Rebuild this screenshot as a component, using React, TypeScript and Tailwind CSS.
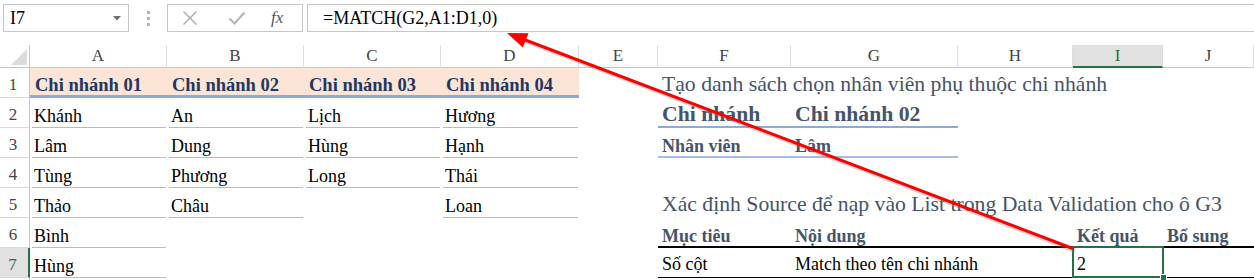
import type { ReactNode } from 'react';

const COLS = ['A', 'B', 'C', 'D', 'E', 'F', 'G', 'H', 'I', 'J'];

function RowHead({ n, active = false }: { n?: number; active?: boolean }) {
  return (
    <div
      className={`h-[30px] flex items-end justify-center pr-[3px] pb-[2px] border-b border-[#dadada] ${
        active ? 'bg-[#e1e1e1] text-[#217346] border-r-2 border-r-[#217346]' : 'text-[#444] border-r border-r-[#c6c6c6]'
      }`}
    >
      {n !== undefined && <span className="text-[17px] leading-[20px]">{n}</span>}
    </div>
  );
}

function ListHead({ text }: { text: string }) {
  return (
    <div className="h-[30px] flex items-end bg-[#fce4d6] border-b-[3px] border-[#8ea9db] pl-[5px]">
      <span className="text-[18.5px] leading-[20px] font-bold text-[#203764] whitespace-nowrap">{text}</span>
    </div>
  );
}

function ListCell({ text }: { text?: string }) {
  if (!text) return <div className="h-[30px]" />;
  return (
    <div className="h-[30px] flex">
      <div className="flex-1 ml-[2px] mr-[1px] flex items-end border-b border-[#a9bde3] pl-[2px] pb-[1px]">
        <span className="text-[18px] leading-[20px] text-black whitespace-nowrap">{text}</span>
      </div>
    </div>
  );
}

function Cell({ children, className = '' }: { children?: ReactNode; className?: string }) {
  return <div className={`h-[30px] flex items-end pl-[4px] whitespace-nowrap ${className}`}>{children}</div>;
}

const listA = ['Khánh', 'Lâm', 'Tùng', 'Thảo', 'Bình', 'Hùng'];
const listB = ['An', 'Dung', 'Phương', 'Châu'];
const listC = ['Lịch', 'Hùng', 'Long'];
const listD = ['Hương', 'Hạnh', 'Thái', 'Loan'];

export default function App() {
  const title = 'text-[21.7px] leading-[24px] text-[#44546a]';
  const h18 = 'text-[18px] leading-[20px] font-bold text-[#44546a]';
  const body = 'text-[18px] leading-[20px] text-black';

  // right hand block (columns E..J) per row
  const right = (r: number) => {
    switch (r) {
      case 1:
        return [
          <Cell key="e" />,
          <Cell key="f" className="pb-[2px]">
            <span className={title}>Tạo danh sách chọn nhân viên phụ thuộc chi nhánh</span>
          </Cell>,
          <Cell key="g" />, <Cell key="h" />, <Cell key="i" />, <Cell key="j" />,
        ];
      case 2:
        return [
          <Cell key="e" />,
          <Cell key="f" className="border-b-2 border-[#8eaadb]">
            <span className={`${title} font-bold`}>Chi nhánh</span>
          </Cell>,
          <Cell key="g" className="border-b-2 border-[#8eaadb]">
            <span className={`${title} font-bold`}>Chi nhánh 02</span>
          </Cell>,
          <Cell key="h" />, <Cell key="i" />, <Cell key="j" />,
        ];
      case 3:
        return [
          <Cell key="e" />,
          <Cell key="f" className="border-b-2 border-[#a4bbe6]">
            <span className={h18}>Nhân viên</span>
          </Cell>,
          <Cell key="g" className="border-b-2 border-[#a4bbe6]">
            <span className={h18}>Lâm</span>
          </Cell>,
          <Cell key="h" />, <Cell key="i" />, <Cell key="j" />,
        ];
      case 5:
        return [
          <Cell key="e" />,
          <Cell key="f" className="pb-[2px]">
            <span className={title}>Xác định Source để nạp vào List trong Data Validation cho ô G3</span>
          </Cell>,
          <Cell key="g" />, <Cell key="h" />, <Cell key="i" />, <Cell key="j" />,
        ];
      case 6:
        return [
          <Cell key="e" />,
          <Cell key="f" className="border-b-2 border-black"><span className={h18}>Mục tiêu</span></Cell>,
          <Cell key="g" className="border-b-2 border-black"><span className={h18}>Nội dung</span></Cell>,
          <Cell key="h" className="border-b-2 border-black" />,
          <Cell key="i" className="border-b-2 border-black"><span className={h18}>Kết quả</span></Cell>,
          <Cell key="j" className="border-b-2 border-black"><span className={h18}>Bổ sung</span></Cell>,
        ];
      case 7:
        return [
          <Cell key="e" />,
          <Cell key="f" className="border-b border-black pb-[3px]"><span className={body}>Số cột</span></Cell>,
          <Cell key="g" className="border-b border-black pb-[3px]"><span className={body}>Match theo tên chi nhánh</span></Cell>,
          <Cell key="h" className="border-b border-black" />,
          <Cell key="i" className="border-b border-black pb-[3px] relative">
            <span className={body}>2</span>
            <div className="absolute -left-[1px] -top-[2px] -right-[1px] -bottom-[1px] border-2 border-[#217346]" />
            <div className="absolute -right-[4px] -bottom-[4px] w-[7px] h-[7px] bg-[#217346] border border-white" />
          </Cell>,
          <Cell key="j" className="border-b border-black" />,
        ];
      default:
        return [0, 1, 2, 3, 4, 5].map((k) => <Cell key={k} />);
    }
  };

  return (
    <div className="relative w-[1254px] h-[280px] overflow-hidden bg-white font-['Liberation_Serif',serif] text-black">
      {/* formula bar */}
      <div className="h-[45px] flex items-start pt-[4px] pl-[3px]">
        <div className="w-[126px] h-[28px] border border-[#c6c6c6] flex items-center justify-between pl-[6px] pr-[7px]">
          <span className="text-[18px] leading-[20px]">I7</span>
          <svg width="8" height="5" viewBox="0 0 8 5">
            <path d="M0 0 H8 L4 4.5 Z" fill="#6f6f6f" />
          </svg>
        </div>
        <div className="w-[38px] h-[28px] flex flex-col items-center justify-center gap-[3px]">
          <div className="w-[3px] h-[3px] bg-[#b4b4b4]" />
          <div className="w-[3px] h-[3px] bg-[#b4b4b4]" />
          <div className="w-[3px] h-[3px] bg-[#b4b4b4]" />
        </div>
        <div className="w-[136px] h-[28px] border border-[#c6c6c6] flex items-center pl-[14px]">
          <svg width="16" height="16" viewBox="0 0 16 16">
            <path d="M1.5 1.5 L14.5 14.5 M14.5 1.5 L1.5 14.5" stroke="#a8a8a8" strokeWidth="1.4" />
          </svg>
          <svg width="18" height="16" viewBox="0 0 18 16" className="ml-[30px]">
            <path d="M1.5 8.5 L6.5 13.5 L16.5 2.5" stroke="#b4b4b4" strokeWidth="2" fill="none" />
          </svg>
          <span className="ml-[25px] text-[17px] leading-[20px] italic text-[#555]">fx</span>
        </div>
        <div className="ml-[4px] flex-1 h-[28px] border border-r-0 border-[#c6c6c6] flex items-center pl-[15px]">
          <span className="text-[18px] leading-[20px]">=MATCH(G2,A1:D1,0)</span>
        </div>
      </div>

      {/* sheet */}
      <div className="grid grid-cols-[30px_137px_137px_137px_138px_79px_133px_167px_115px_90px_91px]">
        {/* column headers */}
        <div className="h-[23px] border-b border-r border-[#c6c6c6] flex items-end justify-end pr-[2px] pb-[2px]">
          <svg width="16" height="16" viewBox="0 0 16 16">
            <path d="M16 0 L16 16 L0 16 Z" fill="#dcdcdc" />
          </svg>
        </div>
        {COLS.map((c) => (
          <div
            key={c}
            className={`h-[23px] flex items-center justify-center border-r border-[#dedede] ${
              c === 'I' ? 'bg-[#e1e1e1] text-[#217346] border-b-2 border-b-[#217346]' : 'text-[#444] border-b border-b-[#c6c6c6]'
            }`}
          >
            <span className="text-[17px] leading-[22px]">{c}</span>
          </div>
        ))}

        {/* row 1 */}
        <RowHead n={1} />
        <ListHead text="Chi nhánh 01" />
        <ListHead text="Chi nhánh 02" />
        <ListHead text="Chi nhánh 03" />
        <ListHead text="Chi nhánh 04" />
        {right(1)}

        {[2, 3, 4, 5, 6, 7, 8].map((r) => [
          <RowHead key={`h${r}`} n={r < 8 ? r : undefined} active={r === 7} />,
          <ListCell key={`a${r}`} text={listA[r - 2]} />,
          <ListCell key={`b${r}`} text={listB[r - 2]} />,
          <ListCell key={`c${r}`} text={listC[r - 2]} />,
          <ListCell key={`d${r}`} text={listD[r - 2]} />,
          ...right(r),
        ])}
      </div>

      {/* red arrow */}
      <svg className="absolute inset-0 pointer-events-none" width="1254" height="280" viewBox="0 0 1254 280">
        <line x1="1074" y1="250" x2="524" y2="40" stroke="#808080" strokeOpacity="0.35" strokeWidth="3" transform="translate(1 1.5)" />
        <line x1="1074" y1="249" x2="524" y2="39.5" stroke="#ff0000" strokeWidth="3" />
        <polygon points="507,33 528.5,33.2 522.8,47.5" fill="#ff0000" />
      </svg>
    </div>
  );
}
